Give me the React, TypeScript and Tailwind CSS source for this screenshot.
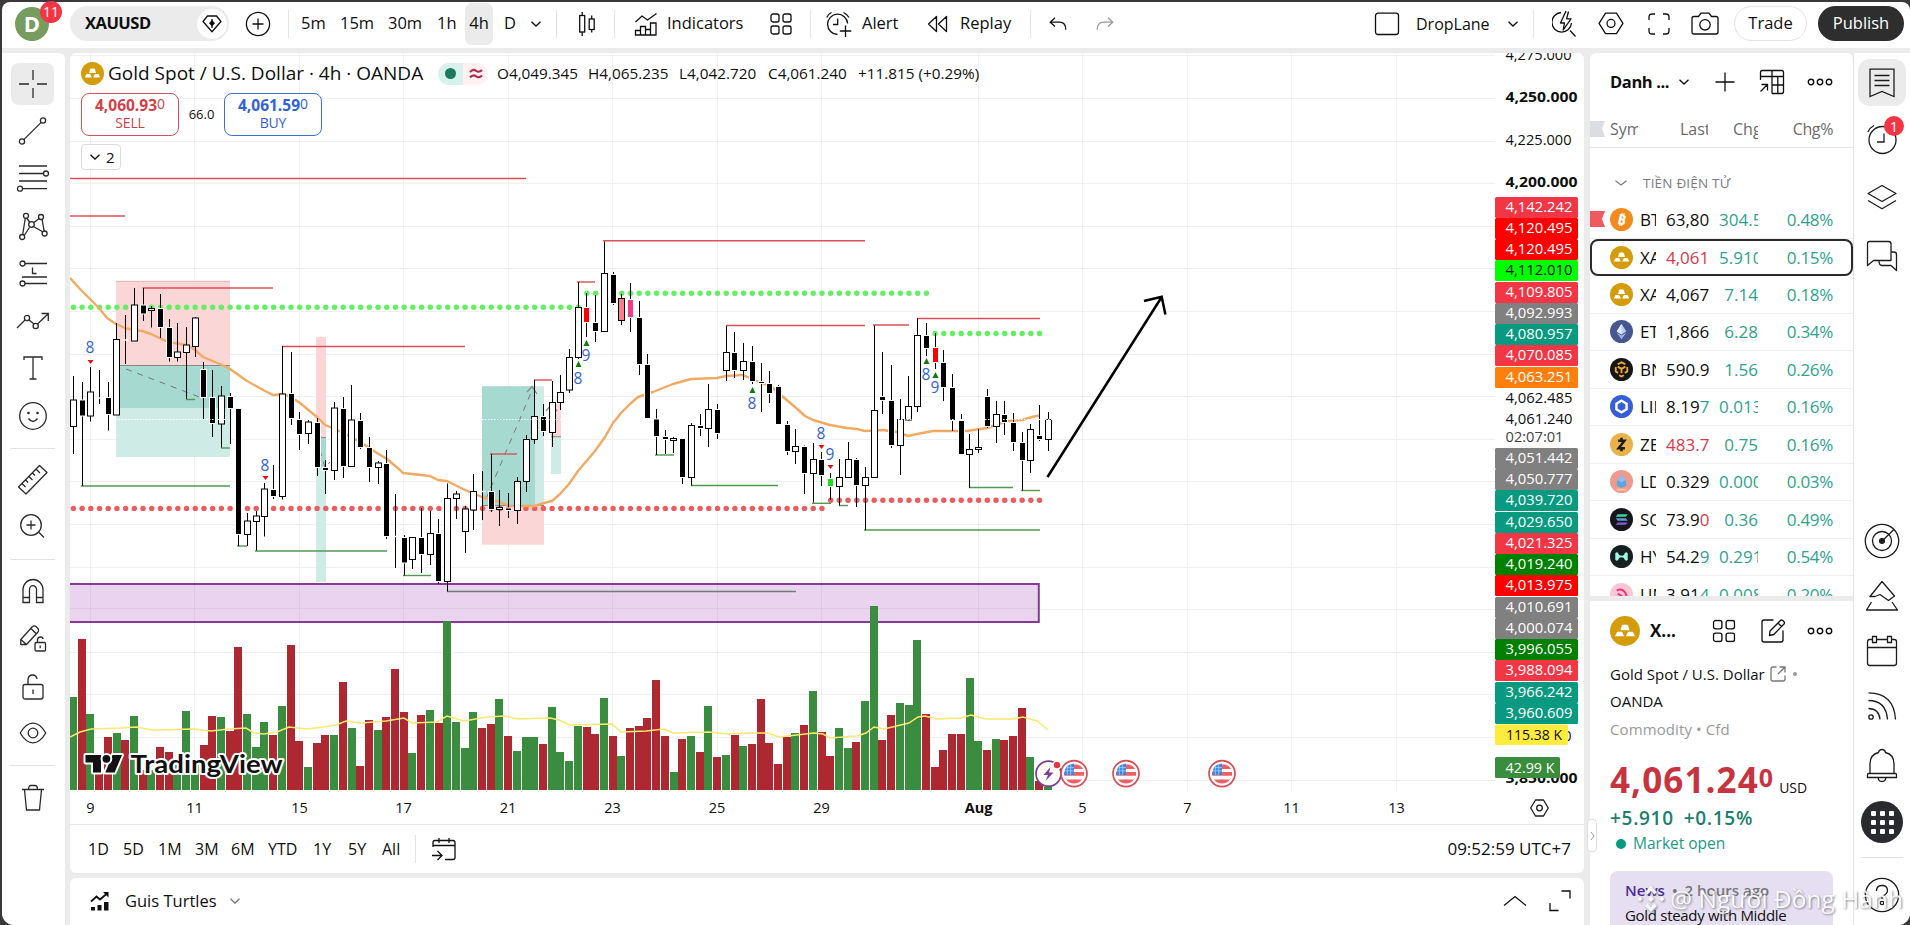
import type { ReactNode } from 'react';

type CandleKind = 'h' | 'f' | 'd' | 'red' | 'pink' | 'magenta' | 'green';
type Candle = [high: number, top: number, bottom: number, low: number, kind: CandleKind];

const FIRST_X = 73.4;
const STEP = 8.704;
const barX = (i: number) => FIRST_X + STEP * i;

const candles: Candle[] = [
  [376, 400, 426.5, 454, 'h'], [382, 400.5, 415.5, 486, 'f'], [367, 392, 416, 421.5, 'h'], [370, 398, 398, 404, 'd'],
  [382, 398, 414, 430.5, 'f'], [323, 339.5, 415, 415, 'h'], [315, 340, 340, 364, 'd'], [288, 305, 341, 341, 'h'],
  [288, 305.5, 313.5, 321, 'f'], [306, 308.5, 310.5, 327.5, 'h'], [294, 309, 327, 338, 'f'], [319, 328, 357, 361.5, 'f'],
  [323, 352, 357.5, 361.5, 'h'], [327, 345, 352.5, 399, 'h'], [317, 318, 346.5, 357, 'h'], [362, 370, 397, 419, 'f'],
  [370, 398, 423, 437, 'f'], [386, 396, 424, 447.5, 'h'], [393, 397, 408, 444, 'f'], [409, 409, 534, 546, 'f'],
  [513, 521, 534.5, 546, 'h'], [511, 516, 521.5, 550.5, 'h'], [483, 489, 516.5, 536.5, 'h'], [465, 490, 496, 499, 'f'],
  [346, 394, 496.5, 499.5, 'h'], [352, 394, 418, 425, 'f'], [412, 420, 434, 450, 'f'], [420, 422, 433.5, 444, 'h'],
  [418, 423, 467, 476, 'f'], [460, 468, 470, 494, 'f'], [402, 408, 470.5, 480, 'h'], [397, 409, 466, 478, 'f'],
  [385, 420, 466.5, 466.5, 'h'], [413, 421, 447, 449, 'f'], [437, 448, 467, 482, 'f'], [461, 463, 467.5, 484, 'h'],
  [450, 464, 536, 539, 'f'], [494, 536.5, 536.5, 568, 'd'], [535, 538, 562.5, 575.5, 'f'], [537, 537.5, 559.5, 569, 'h'],
  [508, 538, 554, 573, 'f'], [511, 533.5, 554.5, 565, 'h'], [519, 534, 581, 584, 'f'], [483.5, 498.5, 581.5, 591.5, 'h'],
  [491, 494, 498.5, 519, 'h'], [506, 509, 531.5, 553, 'h'], [474, 491.5, 510, 530, 'h'], [471, 491.5, 491.5, 520, 'd'],
  [454, 492, 509, 512, 'f'], [490, 507.5, 509.5, 526, 'h'], [493, 508.5, 510, 518, 'f'], [477, 481.5, 510.5, 524, 'h'],
  [435, 439.5, 481.5, 492, 'h'], [380, 416.5, 439.5, 444, 'h'], [404, 417, 431, 436, 'f'], [381, 402.5, 432.5, 447, 'h'],
  [375, 392.5, 402.5, 410, 'h'], [349, 357.5, 390, 393, 'h'], [282, 307.5, 357.5, 359, 'h'], [293, 308, 322, 337, 'red'],
  [295, 323, 331, 342, 'f'], [241.5, 273.5, 331.5, 331.5, 'h'], [272, 275, 303, 305, 'f'], [294, 298.5, 320.5, 325, 'pink'],
  [283, 300, 317, 332, 'magenta'], [301, 318, 364, 375, 'f'], [354, 365, 418, 418, 'f'], [409, 419.5, 436, 455, 'f'],
  [430, 437, 439, 454, 'f'], [437, 438.5, 440.5, 453, 'h'], [439, 439, 477, 484, 'f'], [423, 425.5, 477.5, 485.5, 'h'],
  [414, 426, 428, 436, 'f'], [384, 409.5, 428.5, 447, 'h'], [404, 410, 433, 439, 'f'], [326, 352.5, 370.5, 381, 'h'],
  [332, 353, 370, 378, 'f'], [343, 361.5, 370.5, 380, 'h'], [346, 362, 381, 384, 'f'], [363, 382, 383, 412, 'f'],
  [371, 384, 393, 403, 'f'], [385, 387, 424, 424, 'f'], [421, 425, 451, 455, 'f'], [429, 446.5, 451.5, 464, 'h'],
  [445.5, 447, 473, 494, 'f'], [443, 459.5, 473.5, 502.5, 'h'], [452, 460, 475, 486, 'f'], [473, 479, 486, 500, 'green'],
  [459, 477.5, 486.5, 505.5, 'h'], [442, 459.5, 477.5, 477.5, 'h'], [458, 460, 485, 507, 'f'], [467, 477.5, 485.5, 530, 'h'],
  [325.5, 410.5, 477.5, 477.5, 'h'], [352, 397, 400, 414, 'f'], [365, 401, 445, 448, 'f'], [399, 419.5, 445.5, 475, 'h'],
  [376, 406.5, 420, 420.5, 'h'], [318.5, 335.5, 406.5, 412, 'h'], [323, 336, 348, 356, 'f'], [333, 348, 362, 369, 'red'],
  [350, 363, 387, 401, 'f'], [374, 388, 420, 431, 'f'], [414, 421, 454, 454, 'f'], [434, 449.5, 454.5, 488, 'h'],
  [429, 447.5, 449.5, 453, 'h'], [389, 397, 426, 428, 'f'], [401, 414.5, 426.5, 443, 'h'], [401, 415, 422, 435, 'f'],
  [413, 423, 442, 451, 'f'], [432, 443, 460, 490.5, 'f'], [424, 429.5, 460.5, 473, 'h'], [405, 436, 439, 441, 'f'],
  [412, 419.5, 439.5, 451, 'h'],
];

// volume bar tops, g = up bar, r = down bar
const volume = (
  'g697 r639 g714 r770 r737 g733 r740 g716 r770 g770 r747 r752 g765 g711 g765 r745 r716 g717 r731 r647 g714 g747 g722 r735 '
  + 'g706 r645 r741 g767 r743 r735 g735 r682 g728 r766 r720 g730 r717 r669 r712 g753 r715 g710 r723 g621 g722 g748 g712 r728 '
  + 'r724 g699 r736 g751 g737 g737 r744 g707 g752 g761 g726 r727 r734 g698 r736 g756 r728 r726 r718 r680 r736 g772 r739 g736 '
  + 'r752 g706 r757 g755 r735 g746 r744 r699 r743 r764 r737 g733 r725 g691 r732 r756 g728 g748 r742 g701 g606 r740 r715 g703 '
  + 'g705 g640 r714 r767 r750 r734 r734 g678 g741 r750 g739 r740 r736 r708 g757 r781 g787'
).split(' ');

const maLine
  = '70,278 81,290 99,308 107,318 116,324 125,328 134,330 142,331 151,334 168,342 186,345 194,349 203,357 220,364 230,369 247,381 265,391 273,395 283,394 291,397 300,403 317,417 325,425 333,428 347,435 362,443 377,453 387,459 400,470 403,473 412,474 430,476 438,480 447,481 463,489 482,497 500,502 509,506 535,506 544,503 552,501 560,494 569,484 578,471 595,451 605,437 613,423 621,413 630,404 638,397 653,392 673,384 691,379 717,378 726,376 743,375 752,379 762,383 772,387 782,396 795,407 805,416 813,420 830,425 847,428 857,429 865,431 883,430 897,432 908,436 917,434 933,431 967,431 987,428 1007,421 1022,420 1032,417 1039,415.5';

const volumeMa
  = '70,737 80,732 91,729 121,728 136,727 152,730 193,729 211,731 229,729 246,728 254,733 264,734 277,732 289,727 307,729 323,727 336,725 346,721 361,723 386,721 404,718 412,723 437,722 447,716 464,721 487,717 505,716 518,719 550,718 559,720 570,725 612,724 621,732 646,731 664,729 673,733 709,732 727,734 750,733 768,733 779,737 814,733 823,734 830,738 857,736 866,733 874,727 884,729 909,723 918,717 925,716 937,719 961,718 971,715 986,719 1014,719 1023,717 1037,721 1048,730';

const resistance = [
  [70, 526, 178.5], [70, 125, 216], [142.5, 273, 288], [282, 465, 346.5], [577, 595, 282], [534, 552, 380],
  [490, 517, 454], [603, 865, 240.7], [726, 865, 325.5], [873, 909, 325], [917, 1040, 318.5],
];

const support = [
  [81, 230, 486], [221, 230, 448], [186, 195, 399.5], [237, 247, 546], [255, 387, 551], [403, 431, 575.5],
  [447, 796, 591.5], [655, 674, 455], [691, 778, 485.5], [812, 831, 503.3], [839, 848, 505.5], [864, 1040, 530],
  [969, 1013, 487.5], [1021, 1040, 490.5],
];

// first bar, last bar, y, colour
const dotRuns: [number, number, number, string][] = [
  [0, 58, 307.3, '#62f062'], [59, 98, 293.3, '#62f062'], [99, 111, 333.5, '#62f062'],
  [0, 86, 508.4, '#ec5c5c'], [87, 111, 500.3, '#ec5c5c'],
];

const signals: [string, number, number, number, 'up' | 'down'][] = [
  ['8', 90, 347, 362, 'down'], ['8', 265, 465, 478, 'down'], ['9', 586, 355, 343, 'up'], ['8', 578, 378, 364, 'up'],
  ['8', 752, 403, 390, 'up'], ['8', 821, 433, 447, 'down'], ['9', 830, 454, 467, 'down'], ['8', 926, 374, 361, 'up'],
  ['9', 935, 387, 375, 'up'],
];

const priceTags: [string, number, string, string][] = [
  ['4,142.242', 197, '#f23645', '#fff'], ['4,120.495', 218, '#ff0000', '#fff'], ['4,120.495', 239, '#ff0000', '#fff'],
  ['4,112.010', 260, '#00ff00', '#0f0f0f'], ['4,109.805', 282, '#f23645', '#fff'], ['4,092.993', 303, '#808080', '#fff'],
  ['4,080.957', 324, '#089981', '#fff'], ['4,070.085', 345, '#f23645', '#fff'], ['4,063.251', 367, '#ff7f0e', '#fff'],
  ['4,062.485', 388, '#ffffff', '#0f0f0f'], ['4,061.240', 409, '#ffffff', '#0f0f0f'],
  ['4,051.442', 448, '#808080', '#fff'], ['4,050.777', 469, '#808080', '#fff'], ['4,039.720', 490, '#089981', '#fff'],
  ['4,029.650', 512, '#089981', '#fff'], ['4,021.325', 533, '#f23645', '#fff'], ['4,019.240', 554, '#008000', '#fff'],
  ['4,013.975', 575, '#ff0000', '#fff'], ['4,010.691', 597, '#808080', '#fff'], ['4,000.074', 618, '#808080', '#fff'],
  ['3,996.055', 639, '#008000', '#fff'], ['3,988.094', 660, '#f23645', '#fff'], ['3,966.242', 682, '#089981', '#fff'],
  ['3,960.609', 703, '#089981', '#fff'],
];

const dateTicks: [string, number][] = [
  ['9', 90.5], ['11', 194.5], ['15', 299.5], ['17', 403.5], ['21', 508], ['23', 612.5], ['25', 717], ['29', 821.5],
  ['Aug', 978.5], ['5', 1082.5], ['7', 1187.5], ['11', 1291.5], ['13', 1396.5],
];

const candleFill: Record<CandleKind, string> = {
  h: '#fff', f: '#000', d: '#fff', red: '#ff0000', pink: '#fb7f88', magenta: '#f23a85', green: '#16e216',
};

function Svg({ w, h, className = '', sw = 1.3, children }: { w: number; h: number; className?: string; sw?: number; children: ReactNode }) {
  return (
    <svg width={w} height={h} viewBox={`0 0 ${w} ${h}`} fill="none" stroke="currentColor" strokeWidth={sw} className={`shrink-0 ${className}`}>
      {children}
    </svg>
  );
}

function Chevron({ className = '', size = 10 }: { className?: string; size?: number }) {
  return <Svg w={size} h={6} className={className}><path d={`M.5 .8 L${size / 2} 5 L${size - 0.5} .8`} /></Svg>;
}

function Divider({ className = '' }: { className?: string }) {
  return <div className={`h-7 w-px shrink-0 bg-[#e3e3e3] ${className}`} />;
}

function GoldLogo({ size, className = '' }: { size: number; className?: string }) {
  return (
    <svg width={size} height={size} viewBox="0 0 24 24" className={`shrink-0 ${className}`}>
      <circle cx="12" cy="12" r="12" fill="#d49c0a" />
      <g fill="#fff">
        <path d="M8.4 11.4 L9.5 7.6 Q9.8 6.9 10.5 6.9 H13.5 Q14.2 6.9 14.5 7.6 L15.6 11.4Z" />
        <path d="M4 16.2 L5.3 13.3 Q5.6 12.6 6.3 12.6 H9 Q9.7 12.6 10 13.3 L11.3 16.2Z" />
        <path d="M12.7 16.2 L14 13.3 Q14.3 12.6 15 12.6 H17.7 Q18.4 12.6 18.7 13.3 L20 16.2Z" />
      </g>
    </svg>
  );
}

function FourSquares({ size }: { size: number }) {
  return (
    <Svg w={22} h={22} className={size > 22 ? 'scale-105' : ''}>
      <rect x="1" y="1" width="8" height="8" rx="2" />
      <rect x="13" y="1" width="8" height="8" rx="2" />
      <rect x="1" y="13" width="8" height="8" rx="2" />
      <rect x="13" y="13" width="8" height="8" rx="2" />
    </Svg>
  );
}

function MoreDots() {
  return (
    <Svg w={26} h={10} sw={1.4}>
      <circle cx="4" cy="5" r="2.7" />
      <circle cx="13" cy="5" r="2.7" />
      <circle cx="22" cy="5" r="2.7" />
    </Svg>
  );
}

function Hexagon({ size }: { size: number }) {
  return (
    <svg width={size} height={size * 0.88} viewBox="0 0 26 23" fill="none" stroke="currentColor" strokeWidth={size > 20 ? 1.3 : 1.8} className="shrink-0">
      <path d="M7.5 1.2 H18.5 L25 11.5 L18.5 21.8 H7.5 L1 11.5Z" strokeLinejoin="round" />
      <circle cx="13" cy="11.5" r="4" />
    </svg>
  );
}

function TopBar() {
  return (
    <header className="flex h-[46px] shrink-0 items-center rounded-t-lg bg-white pb-[3px] text-[16.5px] font-medium whitespace-nowrap">
      <div className="relative ml-[13px] flex size-[34px] items-center justify-center rounded-full bg-[#769c5f] text-[22px] font-bold text-white">
        D
        <span className="absolute -top-[6px] left-[25px] flex size-[22px] items-center justify-center rounded-full bg-[#f23645] text-[14px] font-normal">11</span>
      </div>
      <div className="ml-[21px] flex h-[35px] w-[159px] items-center justify-between rounded-full bg-[#ebebeb] pr-0.5 pl-[15px]">
        <span className="font-bold tracking-[-0.5px]">XAUUSD</span>
        <span className="flex size-[30px] items-center justify-center rounded-full bg-white">
          <Svg w={20} h={18}>
            <path d="M5.5 1 H14.5 L19 6.5 L10 16.8 L1 6.5Z" strokeLinejoin="round" />
            <path d="M10 4 V13" />
            <path d="M10 5 L13 8.2 L10 11.5 L7 8.2Z" fill="currentColor" stroke="none" />
          </Svg>
        </span>
      </div>
      <Svg w={26} h={26} className="ml-[16px]">
        <circle cx="13" cy="13" r="11.6" />
        <path d="M13 7.5 V18.5 M7.5 13 H18.5" />
      </Svg>
      <Divider className="ml-[17px]" />
      <span className="ml-[12px] w-[39px]">5m</span>
      <span className="w-[48px]">15m</span>
      <span className="w-[49px]">30m</span>
      <span className="w-[28px]">1h</span>
      <span className="flex h-[42px] w-[28px] items-center justify-center rounded-[7px] bg-[#ebebeb]">4h</span>
      <span className="ml-[11px] w-[27px]">D</span>
      <Chevron />
      <Divider className="ml-[15px]" />
      <Svg w={18} h={26} className="ml-[21px]">
        <rect x="1.7" y="4.5" width="5" height="16.5" />
        <path d="M4.2 1 V4.5 M4.2 21 V25 M13.7 4.5 V8 M13.7 18.5 V21.5" />
        <rect x="11.2" y="8" width="5" height="10.5" />
      </Svg>
      <Divider className="ml-[18px]" />
      <Svg w={24} h={24} className="ml-[19px]">
        <path d="M1.5 10 L8 4 L13.5 8 L22.5 1.5" />
        <path d="M1.5 23 V18.5 H6.5 V23 M6.5 19 V14.5 H11.5 V23 M11.5 17.5 H16.5 V23 M16.5 18 V11 H22 V23 M1 23 H22.5" />
      </Svg>
      <span className="ml-[9px] w-[103px]">Indicators</span>
      <FourSquares size={22} />
      <Divider className="ml-[18px]" />
      <Svg w={28} h={26} className="ml-[14px]">
        <path d="M12.5 23.5 A10 10.2 0 1 1 22.6 12.5" />
        <path d="M12.7 7.5 V13.5 H8 M1.8 6.5 Q3 3 6.5 1.5 M18.5 1.5 Q22 3 24 6.5" />
        <path d="M20.5 14.5 V26 M14.8 20 H26.3" />
      </Svg>
      <span className="ml-[9px] w-[65px]">Alert</span>
      <Svg w={22} h={18}>
        <path d="M9.5 1.5 V16.5 L1.5 9Z M19.5 1.5 V16.5 L11.5 9Z" strokeLinejoin="round" />
      </Svg>
      <span className="ml-[11px] w-[70px]">Replay</span>
      <Divider />
      <Svg w={18} h={14} className="ml-[18px]">
        <path d="M6 .8 L1.2 5.2 L6 9.6 M1.2 5.2 H10.5 Q16.8 5.2 16.8 12.8" />
      </Svg>
      <Svg w={18} h={14} className="ml-[29px] text-[#9a9a9a]">
        <path d="M12 .8 L16.8 5.2 L12 9.6 M16.8 5.2 H7.5 Q1.2 5.2 1.2 12.8" />
      </Svg>

      <div className="ml-auto flex items-center">
        <Svg w={26} h={24}><rect x="1.5" y="1.2" width="23" height="21.3" rx="2.5" /></Svg>
        <span className="ml-[16px] w-[92px] text-[16px]">DropLane</span>
        <Chevron />
        <Divider className="ml-[15px]" />
        <Svg w={26} h={28} className="ml-[18px]">
          <path d="M9 2.5 A9.8 9.8 0 1 0 19.5 13 M18 20.5 L23.5 26.5" />
          <path d="M14 1 L8.5 13 H12.5 L11.2 20 L19 8.8 H14.6 L16.5 1.5" strokeLinejoin="round" />
        </Svg>
        <div className="ml-[20px]"><Hexagon size={26} /></div>
        <Svg w={22} h={22} className="ml-[24px]">
          <path d="M1 7 V4 Q1 1 4 1 H7 M15 1 H18 Q21 1 21 4 V7 M21 15 V18 Q21 21 18 21 H15 M7 21 H4 Q1 21 1 18 V15" />
        </Svg>
        <Svg w={28} h={24} className="ml-[21px]">
          <path d="M1 6.5 Q1 4.5 3 4.5 H7.5 L10 1.2 H18 L20.5 4.5 H25 Q27 4.5 27 6.5 V20 Q27 22 25 22 H3 Q1 22 1 20Z" />
          <circle cx="14" cy="12.8" r="5.2" />
        </Svg>
        <span className="ml-[15px] flex h-[35px] w-[73px] items-center justify-center rounded-full border border-[#e3e3e3]">Trade</span>
        <span className="mr-[6px] ml-[11px] flex h-[35px] w-[86px] items-center justify-center rounded-full bg-[#2e2e2e] text-white">Publish</span>
      </div>
    </header>
  );
}

function LeftTools() {
  return (
    <aside className="flex w-[63px] shrink-0 flex-col items-center rounded-tr-md rounded-bl-xl bg-white pr-[2px] text-[#2a2a2a]">
      <div className="mt-[10px] flex h-[42px] w-[43px] items-center justify-center rounded-lg bg-[#ebebeb]">
        <Svg w={30} h={30}><path d="M15 1 V11 M15 19 V29 M1 15 H11 M19 15 H29" /></Svg>
      </div>
      <Svg w={30} h={30} className="mt-[11px]">
        <circle cx="4" cy="25.5" r="2.6" />
        <circle cx="25" cy="4.5" r="2.6" />
        <path d="M5.8 23.6 L23.2 6.4" />
      </Svg>
      <Svg w={32} h={28} className="mt-[18px]">
        <path d="M2 2 H30 M2 9.5 H26.5 M2 17 H30 M5.5 24.7 H30" />
        <circle cx="29" cy="9.5" r="2.5" />
        <circle cx="3" cy="24.7" r="2.5" />
      </Svg>
      <Svg w={30} h={30} className="mt-[19px]">
        <path d="M4.7 23.5 L7.3 7 M8.6 7 L12 11.5 M16 11.5 L21.5 7.3 M24 8 L26.2 20.5 M6.5 24 L11.5 16.5 M15.5 15.5 L25 21" />
        <circle cx="8" cy="4.8" r="2.5" />
        <circle cx="23" cy="6" r="2.5" />
        <circle cx="13.5" cy="13.5" r="2.8" />
        <circle cx="4.2" cy="26" r="2.5" />
        <circle cx="26.6" cy="22.5" r="2.5" />
      </Svg>
      <Svg w={30} h={28} className="mt-[19px]">
        <circle cx="4.5" cy="3.5" r="2.5" />
        <circle cx="4.5" cy="23.5" r="2.5" />
        <path d="M7 3.5 H29 M4 17 H29 M7 23.5 H29 M14.5 7.5 V13.5 H18.5" />
      </Svg>
      <Svg w={34} h={20} className="mt-[24px]">
        <path d="M1 16 L9 8 M13 8 L18 12 M21.5 12 L32 2 M25.5 1.5 H32.3 V9" />
        <circle cx="11" cy="6" r="2.6" />
        <circle cx="19.7" cy="14" r="2.6" />
      </Svg>
      <Svg w={22} h={26} className="mt-[23px]">
        <path d="M2 5 V2 H20 V5 M11 2 V24 M7.5 24 H14.5" />
      </Svg>
      <Svg w={30} h={30} className="mt-[20px]">
        <circle cx="15" cy="15" r="13.3" />
        <circle cx="10.5" cy="12" r="1.3" fill="currentColor" stroke="none" />
        <circle cx="19.5" cy="12" r="1.3" fill="currentColor" stroke="none" />
        <path d="M10.5 17.5 Q15 23.5 19.5 17.5" />
      </Svg>
      <div className="mt-[17px] h-px w-[45px] bg-[#e3e3e3]" />
      <Svg w={32} h={32} className="mt-[15px]">
        <path d="M22.5 1.5 L30 8.5 L9 30 L1.5 23Z M19 5 L23 9 M15.5 9 L18 11.5 M12 12.5 L15.5 16 M8.5 16 L11 18.5 M5 19.5 L8.5 23" strokeLinejoin="round" />
      </Svg>
      <Svg w={28} h={28} className="mt-[17px]">
        <circle cx="12" cy="12" r="10.3" />
        <path d="M12 7.5 V16.5 M7.5 12 H16.5 M19.5 19 L25 24.5" />
      </Svg>
      <div className="mt-[18px] h-px w-[45px] bg-[#e3e3e3]" />
      <Svg w={24} h={26} className="mt-[18px]">
        <path d="M2 24.5 V11.5 A10 10 0 0 1 22 11.5 V24.5 H15.5 V11.5 A3.5 3.8 0 0 0 8.5 11.5 V24.5Z M2 19.5 H8.5 M15.5 19.5 H22" />
      </Svg>
      <Svg w={28} h={30} className="mt-[20px]">
        <path d="M1.8 15.5 L13.5 2.5 Q15.5 1 17.5 3 L19.3 5 Q20 6.5 19 8 L7.5 20.5 H1.8Z M12 4.5 L17.5 10 M1.8 15.5 L7.5 20.5" strokeLinejoin="round" />
        <rect x="16" y="18.5" width="10.5" height="8.5" rx="1.2" />
        <path d="M18.5 18.5 V15.5 Q19 13 21.5 13 Q24 13 24 15 M21.2 21.5 V24.2" />
      </Svg>
      <Svg w={22} h={28} className="mt-[19px]">
        <rect x="1" y="11.5" width="20" height="14.5" rx="2" />
        <path d="M6 11.5 V6.5 Q6.5 2 10.5 2 Q14.5 2 15 6 M11 16.5 V21" />
      </Svg>
      <Svg w={28} h={24} className="mt-[20px]">
        <path d="M1.2 12 Q7 2.2 14 2.2 T26.8 12 Q21 21.8 14 21.8 T1.2 12Z" />
        <circle cx="14" cy="12" r="4.8" />
      </Svg>
      <div className="mt-[20px] h-px w-[45px] bg-[#e3e3e3]" />
      <Svg w={24} h={28} className="mt-[18px]">
        <path d="M1 5.5 H23 M3.5 5.5 L5.5 26 H18.5 L20.5 5.5 M7.5 5.5 Q7.5 1.5 10 1.5 H14 Q16.5 1.5 16.5 5.5" />
      </Svg>
    </aside>
  );
}

function FlagEvent({ x }: { x: number }) {
  return (
    <g transform={`translate(${x} 773.6)`}>
      <circle r="13" fill="#fff" stroke="#dc4b53" strokeWidth="1.7" />
      <path d="M-1 -9 H3 Q7.5 -8 9 -4.5 H-1Z M-9.8 -1.5 H10 V2.2 H-9.8Z M-8 6 H8 Q5 10 0 10 T-8 6Z" fill="#ee5f63" />
      <path d="M0 -10 V1.5 H-10 Q-9.5 -9.5 0 -10Z" fill="#3f86e0" />
      <path d="M-7.5 -6 H0 M-9 -2.8 H0 M-6.7 -8 V1.5 M-3.3 -9.5 V1.5" stroke="#a9ceff" strokeWidth=".8" />
    </g>
  );
}

function Chart() {
  return (
    <svg width={1514} height={771} viewBox="70 53 1514 771" className="block" fontSize="15">
      {/* grid */}
      <g stroke="#f0f0f0" strokeWidth="1">
        {Array.from({ length: 18 }, (_, i) => Math.round(55.4 + 42.6 * i) + 0.5).map(y => <path key={y} d={`M70 ${y} H1495`} />)}
        {dateTicks.map(([, x]) => <path key={x} d={`M${Math.floor(x) + 0.5} 53 V790`} />)}
      </g>

      {/* position boxes */}
      <rect x="116" y="281" width="114" height="84.5" fill="#fbd6d6" />
      <rect x="116" y="365.5" width="114" height="91.5" fill="#cfebe5" />
      <rect x="120" y="365.5" width="110" height="42.5" fill="#a6d9cf" />
      <rect x="316" y="337" width="10" height="100.5" fill="#fbd6d6" />
      <rect x="316" y="437.5" width="10" height="144.5" fill="#cfebe5" />
      <rect x="320" y="437.5" width="6" height="31" fill="#a6d9cf" />
      <rect x="482" y="386.3" width="62" height="119.5" fill="#cfebe5" />
      <rect x="482" y="386.3" width="53" height="119.5" fill="#a6d9cf" />
      <rect x="482" y="505.7" width="62" height="39" fill="#fbd6d6" />
      <rect x="551" y="404" width="10" height="33" fill="#fbd6d6" />
      <rect x="551" y="437" width="10" height="37" fill="#cfebe5" />
      <path d="M116 281.3 H230" stroke="#e3b4b4" />
      <path d="M120 365.5 H230 M482 505.5 H544 M551 436.7 H561 M316 437.5 H326" stroke="#888" />
      <path d="M126 369 L202 398 M486 499 L533 388 M320 450 L325 468 L330 462" fill="none" stroke="#777" strokeDasharray="6 6" />
      <path d="M527 392 L532 386.5 L537 394 M546 411 L551 405 L557 411" fill="none" stroke="#8a8a8a" strokeWidth="1.3" />

      {/* demand zone */}
      <rect x="60" y="584" width="978.8" height="38" fill="#ead3ef" />
      <g stroke="#dfc8e4">
        <path d="M70 608.5 H1038" />
        {dateTicks.slice(0, 9).map(([, x]) => <path key={x} d={`M${Math.floor(x) + 0.5} 585 V621`} />)}
      </g>
      <rect x="60" y="584" width="978.8" height="38" fill="none" stroke="#873a93" strokeWidth="2" />

      {/* volume */}
      {volume.map((bar, i) => {
        const top = Number(bar.slice(1));
        const left = Math.max(70, Math.round(barX(i) - 4.4));
        return <rect key={i} x={left} y={top} width={Math.round(barX(i) + 3.6) - left} height={790 - top} fill={bar[0] === 'g' ? '#3a8c3e' : '#ae2832'} />;
      })}
      <polyline points={volumeMa} fill="none" stroke="#fae86f" strokeWidth="1.5" />

      {resistance.map(([x1, x2, y]) => <path key={`${x1}-${y}`} d={`M${x1} ${y} H${x2}`} stroke="#dc5157" strokeWidth="1.4" />)}
      {support.map(([x1, x2, y]) => <path key={`${x1}-${y}`} d={`M${x1} ${y} H${x2}`} stroke={y === 591.5 ? '#6c8072' : '#4f9a50'} strokeWidth="1.4" />)}

      {dotRuns.map(([from, to, y, color]) =>
        Array.from({ length: to - from + 1 }, (_, k) => (
          <circle key={`${from}-${y}-${k}`} cx={barX(from + k)} cy={y} r="2.7" fill={color} />
        )))}

      <polyline points={maLine} fill="none" stroke="#f2aa62" strokeWidth="2.4" strokeLinejoin="round" />

      {/* candles */}
      {candles.map(([high, top, bottom, low, kind], i) => {
        const x = Math.floor(barX(i)) + 0.5;
        if (kind === 'd') {
          return (
            <g key={i}>
              <path d={`M${x} ${high} V${low}`} stroke="#000" />
              <path d={`M${x - 3} ${top} H${x + 3}`} stroke="#fff" strokeWidth="1.4" />
            </g>
          );
        }
        const outlined = kind === 'h' || kind === 'pink';
        return (
          <g key={i}>
            <path d={`M${x} ${high} V${low}`} stroke="#000" />
            {!outlined && <rect x={x - 3.5} y={top - 1} width={7} height={Math.max(1, bottom - top) + 2} fill="#fff" />}
            <rect
              x={outlined ? x - 3 : x - 2.5}
              y={top}
              width={outlined ? 6 : 5}
              height={Math.max(1, bottom - top)}
              fill={candleFill[kind]}
              stroke={outlined ? '#000' : 'none'}
            />
          </g>
        );
      })}
      <path d="M116 419.5 H230 M482 419.5 H561 M895 419.5 H1052" stroke="#fff" strokeDasharray="1.5 1.5" />

      {signals.map(([label, x, y, ty, dir]) => (
        <g key={`${x}-${y}`}>
          <text x={x} y={y + 5.5} textAnchor="middle" fill="#3264d0" fontSize="15.5">{label}</text>
          <path
            d={dir === 'up' ? `M${x - 2.5} ${ty + 3} H${x + 3.5} L${x + 0.5} ${ty - 3}Z` : `M${x - 2.5} ${ty - 2} H${x + 3.5} L${x + 0.5} ${ty + 2}Z`}
            fill={dir === 'up' ? '#0c7a0c' : '#e01010'}
          />
        </g>
      ))}

      <path d="M1047.5 477 L1161.7 297 M1144 301 L1161.7 296.7 L1165.4 314.5" fill="none" stroke="#000" strokeWidth="2.5" />

      {/* events on the time axis */}
      <circle cx="1048.5" cy="773.7" r="12.5" fill="#fff" stroke="#7d3c98" strokeWidth="1.7" />
      <path d="M1050.5 767 L1043.5 775 H1048 L1045.5 781 L1053.5 772.5 H1049Z" fill="#7d3c98" />
      <circle cx="1057" cy="765" r="4.6" fill="#fff" />
      <circle cx="1057" cy="765" r="3.2" fill="#e8373f" />
      <FlagEvent x={1074} />
      <FlagEvent x={1126} />
      <FlagEvent x={1222} />

      {/* brand */}
      <g fill="#111" stroke="#fff" strokeWidth="4" strokeLinejoin="round" paintOrder="stroke">
        <path d="M85.5 755 H101 V772.5 H93 V762.5 H85.5Z M112.5 755 H122 L114.6 772.5 H105.3Z" />
        <circle cx="106.4" cy="758.8" r="3.9" />
        <text x="130.5" y="772.5" fontSize="25.5" fontWeight="700" fontFamily="Lato, sans-serif" textLength="152" lengthAdjust="spacingAndGlyphs">TradingView</text>
      </g>

      {/* price scale */}
      <g fill="#0f0f0f">
        <text x="1505.5" y="60" textLength="66" lengthAdjust="spacingAndGlyphs">4,275.000</text>
        <text x="1505.5" y="102" fontWeight="700" textLength="72" lengthAdjust="spacingAndGlyphs">4,250.000</text>
        <text x="1505.5" y="145" textLength="66" lengthAdjust="spacingAndGlyphs">4,225.000</text>
        <text x="1505.5" y="187" fontWeight="700" textLength="72" lengthAdjust="spacingAndGlyphs">4,200.000</text>
        <text x="1505.5" y="740.5" textLength="66" lengthAdjust="spacingAndGlyphs">3,875.000</text>
        <text x="1505.5" y="783" fontWeight="700" textLength="72" lengthAdjust="spacingAndGlyphs">3,850.000</text>
      </g>
      {priceTags.map(([label, y, bg, fg]) => (
        <g key={`${label}-${y}`}>
          <rect x="1495" y={y} width="83" height="21" rx="1.5" fill={bg} />
          <text x="1505.5" y={y + 15} fill={fg} fontWeight={fg === '#fff' ? 500 : 400} textLength="67" lengthAdjust="spacingAndGlyphs">{label}</text>
        </g>
      ))}
      <text x="1505.5" y="442" fill="#444" textLength="58" lengthAdjust="spacingAndGlyphs">02:07:01</text>
      <rect x="1495" y="724.5" width="73" height="20.5" rx="1.5" fill="#ffeb3b" />
      <text x="1506" y="740" fill="#0f0f0f" textLength="56" lengthAdjust="spacingAndGlyphs">115.38 K</text>
      <rect x="1495" y="757" width="65" height="21" rx="1.5" fill="#388e3c" />
      <text x="1505.5" y="772.5" fill="#fff" fontWeight="500" textLength="49" lengthAdjust="spacingAndGlyphs">42.99 K</text>

      {/* time scale */}
      {dateTicks.map(([label, x]) => (
        <text key={x} x={x} y="813" textAnchor="middle" fill="#0f0f0f" fontWeight={label === 'Aug' ? 700 : 400} fontSize="14.5">{label}</text>
      ))}
      <g fill="none" stroke="#1c1c1c" strokeWidth="1.3">
        <path d="M1535.5 800 H1543.5 L1548.3 808 L1543.5 816 H1535.5 L1530.7 808Z" strokeLinejoin="round" />
        <circle cx="1539.5" cy="808" r="2.8" />
      </g>
    </svg>
  );
}

function TradeButton({ price, sup, side, className }: { price: string; sup: string; side: string; className: string }) {
  return (
    <div className={`flex h-[43px] w-[98px] flex-col items-center justify-center rounded-lg border bg-white pb-[2px] leading-[17px] ${className}`}>
      <span className="text-[15.5px] font-bold">
        {price}
        <span className="relative -top-[2px] text-[14px] font-medium">{sup}</span>
      </span>
      <span className="text-[14px] tracking-[-0.2px]">{side}</span>
    </div>
  );
}

function Legend() {
  return (
    <div className="absolute top-[8px] left-[11px] flex flex-col whitespace-nowrap">
      <div className="flex h-[25px] items-center">
        <GoldLogo size={23} />
        <span className="ml-[4px] w-[330px] text-[19px]">Gold Spot / U.S. Dollar · 4h · OANDA</span>
        <div className="flex h-[22px] w-[50px] overflow-hidden rounded-full">
          <span className="flex w-1/2 items-center justify-center bg-[#d9f1ed]"><span className="size-[11px] rounded-full bg-[#1a7a5e]" /></span>
          <span className="flex w-1/2 items-center justify-center bg-[#fff0f2] text-[#b2284f]">
            <Svg w={14} h={12} sw={2}><path d="M1 4 Q4 .5 7 2.8 T13 2 M1 9.5 Q4 6 7 8.3 T13 7.5" /></Svg>
          </span>
        </div>
        <div className="ml-[9px] flex text-[15.3px]">
          <span className="w-[91px]">O4,049.345</span>
          <span className="w-[91px]">H4,065.235</span>
          <span className="w-[89px]">L4,042.720</span>
          <span className="w-[90px]">C4,061.240</span>
          <span>+11.815 (+0.29%)</span>
        </div>
      </div>
      <div className="mt-[7px] flex items-center">
        <TradeButton price="4,060.93" sup="0" side="SELL" className="border-[#d4525b] text-[#d23f49]" />
        <span className="w-[45px] text-center text-[13px]">66.0</span>
        <TradeButton price="4,061.59" sup="0" side="BUY" className="border-[#3f6fd6] text-[#2f63d8]" />
      </div>
      <div className="mt-[8px] flex h-[26px] w-[40px] items-center gap-[6px] rounded border border-[#dcdcdc] bg-white pl-[8px] text-[15px]">
        <Chevron />
        2
      </div>
    </div>
  );
}

function RangeBar() {
  return (
    <div className="flex h-[48px] items-center border-t border-[#e8e8e8] pr-[13px] pl-[18px] text-[16px] whitespace-nowrap">
      <span className="w-[35px]">1D</span>
      <span className="w-[35px]">5D</span>
      <span className="w-[37px]">1M</span>
      <span className="w-[36px]">3M</span>
      <span className="w-[37px]">6M</span>
      <span className="w-[45px]">YTD</span>
      <span className="w-[35px]">1Y</span>
      <span className="w-[34px]">5Y</span>
      <span className="w-[33px]">All</span>
      <Divider />
      <Svg w={26} h={24} className="ml-[15px]">
        <path d="M2 10 V5.5 Q2 3.5 4 3.5 H22 Q24 3.5 24 5.5 V20.5 Q24 22.5 22 22.5 H14 M2 8.5 H24 M8 1 V6 M18 1 V6 M1 18.5 H10.5 M6.5 14 L11 18.5 L6.5 23" />
      </Svg>
      <span className="ml-auto text-[17px]">09:52:59 UTC+7</span>
    </div>
  );
}

function BottomPanel() {
  return (
    <div className="flex h-[47px] items-center rounded-t-md bg-white pr-[13px] pb-[1px] pl-[20px]">
      <Svg w={20} h={20}>
        <path d="M1 10.5 L6.5 5.5 L10 8.5 L17 2.5" strokeWidth="1.8" />
        <path d="M13 1 H18.5 V6.5Z M1 16 H5 V19.5 H1Z M7.5 14 H11.5 V19.5 H7.5Z M14 11 H18.5 V19.5 H14Z" fill="currentColor" stroke="none" />
      </Svg>
      <span className="ml-[15px] w-[105px] text-[16.5px]">Guis Turtles</span>
      <Chevron className="text-[#777]" />
      <Svg w={24} h={12} className="ml-auto"><path d="M1 10.5 L12 1.5 L23 10.5" /></Svg>
      <Svg w={22} h={22} className="ml-[22px]"><path d="M12.5 1 H21 V8.5 M1 13 V20.5 H9.5" /></Svg>
    </div>
  );
}

interface Quote {
  symbol: string;
  last: ReactNode;
  change: string;
  percent: string;
  logo: ReactNode;
  lastClass?: string;
}

function Coin({ bg, children }: { bg: string; children: ReactNode }) {
  return (
    <svg width={23} height={23} viewBox="0 0 24 24" className="shrink-0">
      <circle cx="12" cy="12" r="12" fill={bg} />
      {children}
    </svg>
  );
}

const up = (head: string, tail: string) => (
  <>
    {head}
    <span className="text-[#2fa28d]">{tail}</span>
  </>
);

const quotes: Quote[] = [
  {
    symbol: 'BTCUSD', last: '63,80', change: '304.57', percent: '0.48%',
    logo: <Coin bg="#f28a1c"><text x="12.3" y="17.3" textAnchor="middle" fontSize="15" fontWeight="700" fill="#fff" transform="rotate(12 12 12)">₿</text></Coin>,
  },
  { symbol: 'XAUUSD', last: '4,061', change: '5.910', percent: '0.15%', lastClass: 'text-[#d93a46]', logo: <GoldLogo size={23} /> },
  { symbol: 'XAUUSDT', last: '4,067', change: '7.14', percent: '0.18%', logo: <GoldLogo size={23} /> },
  {
    symbol: 'ETHUSD', last: '1,866', change: '6.28', percent: '0.34%',
    logo: <Coin bg="#47568f"><path d="M12 4 L17 12 L12 15 L7 12Z" fill="#b9cdf8" /><path d="M12 4 V15 L7 12Z" fill="#e2eaff" /><path d="M7 13.3 L12 16.3 L17 13.3 L12 20Z" fill="#9fb7ef" /></Coin>,
  },
  {
    symbol: 'BNBUSD', last: '590.9', change: '1.56', percent: '0.26%',
    logo: <Coin bg="#161618"><path d="M8 6.5 L12 4.5 L16 6.5 M6 9.5 V14 L8.5 15.5 M18 9.5 V14 L15.5 15.5 M8 9 L12 11.3 L16 9 M12 11.5 V16 M9.5 18 L12 19.3 L14.5 18" fill="none" stroke="#f0a828" strokeWidth="1.9" /></Coin>,
  },
  {
    symbol: 'LINKUSD', last: up('8.19', '7'), change: '0.0137', percent: '0.16%',
    logo: <Coin bg="#345fd8"><path d="M12 6 L17.3 9 V15 L12 18 L6.7 15 V9Z" fill="none" stroke="#fff" strokeWidth="2.5" /></Coin>,
  },
  {
    symbol: 'ZECUSD', last: '483.7', change: '0.75', percent: '0.16%', lastClass: 'text-[#d93a46]',
    logo: <Coin bg="#e9b24a"><path d="M8.5 8 H15 L9 15.8 H15.6 M12 5 V8 M12 16 V19" fill="none" stroke="#1c1c1c" strokeWidth="2.6" /></Coin>,
  },
  {
    symbol: 'LDOUSD', last: '0.329', change: '0.0001', percent: '0.03%',
    logo: <Coin bg="#f09a8d"><path d="M12 4.5 L16.5 11.5 Q18.5 18 12 18.5 Q5.5 18 7.5 11.5Z" fill="#5fa5e3" /><path d="M12 4.5 L16 10.5 L12 13 L8 10.5Z" fill="#86c1f2" /><path d="M7 20.5 H17" stroke="#f7c79a" strokeWidth="2" /></Coin>,
  },
  {
    symbol: 'SOLUSD', last: <>73.9<span className="text-[#d93a46]">0</span></>, change: '0.36', percent: '0.49%',
    logo: <Coin bg="#17171b"><path d="M8 6.5 H18.5 L16.5 9 H6Z" fill="#3fd0a6" /><path d="M6 10.8 H16.5 L18.5 13.3 H8Z" fill="#5b9fd0" /><path d="M8 15 H18.5 L16.5 17.5 H6Z" fill="#8a5be0" /></Coin>,
  },
  {
    symbol: 'HYPEUSD', last: up('54.2', '9'), change: '0.291', percent: '0.54%',
    logo: <Coin bg="#16201f"><path d="M5.5 8.5 Q8 6 9.5 10.5 Q12 12 14.5 10.5 Q16 6 18.5 8.5 V15.5 Q16 18 14.5 13.5 Q12 12 9.5 13.5 Q8 18 5.5 15.5Z" fill="#a5f5e4" /></Coin>,
  },
  {
    symbol: 'UNIUSD', last: up('3.91', '4'), change: '0.0081', percent: '0.20%',
    logo: <Coin bg="#fbc7d6"><path d="M7 8 Q12 5 16 10 Q18 14 17 20 M8 11 L13 14 L10 18" fill="none" stroke="#e5337a" strokeWidth="2" /></Coin>,
  },
];

function FlagMark({ color }: { color: string }) {
  return (
    <svg width={15} height={16} viewBox="0 0 15 16" className="shrink-0">
      <path d="M0 0 H15 L12 8 L15 16 H0Z" fill={color} />
    </svg>
  );
}

function QuoteRow({ quote, index }: { quote: Quote; index: number }) {
  const selected = index === 1;
  return (
    <div className={`flex h-[37.5px] shrink-0 items-center text-[17px] whitespace-nowrap ${selected ? 'rounded-lg outline-2 -outline-offset-2 outline-[#2b2b2b]' : 'border-b border-[#efefef]'}`}>
      <div className="w-[20px]">{index === 0 && <FlagMark color="#f2595f" />}</div>
      {quote.logo}
      <span className="ml-[7px] w-[16px] overflow-hidden">{quote.symbol}</span>
      <span className={`ml-[10px] w-[43px] overflow-hidden ${quote.lastClass ?? ''}`}>{quote.last}</span>
      <span className={`ml-[10px] flex w-[39px] overflow-hidden text-[#2fa28d] ${quote.change.length < 5 ? 'justify-end' : ''}`}>{quote.change}</span>
      <span className="ml-[20px] w-[55px] text-right tracking-[-0.3px] text-[#2fa28d]">{quote.percent}</span>
    </div>
  );
}

function Watchlist() {
  return (
    <section className="flex h-[543px] shrink-0 flex-col overflow-hidden rounded-t-md bg-white">
      <div className="flex h-[58px] shrink-0 items-center pl-[20px]">
        <span className="w-[69px] text-[16.5px] font-bold tracking-[-0.4px]">Danh ...</span>
        <Chevron />
        <Svg w={20} h={20} className="ml-[26px]"><path d="M10 .5 V19.5 M.5 10 H19.5" /></Svg>
        <Svg w={26} h={26} className="ml-[24px]">
          <path d="M1.5 11 V3.5 Q1.5 1.5 3.5 1.5 H22.5 Q24.5 1.5 24.5 3.5 V22.5 Q24.5 24.5 22.5 24.5 H13 M1.5 7.5 H24.5 M13 1.5 V24.5 M18.8 7.5 V24.5 M13 16 H24.5 M1.5 22.5 L8.5 15.5 M2.5 15.5 H8.5 V21.5" />
        </Svg>
        <div className="ml-[22px]"><MoreDots /></div>
      </div>
      <div className="flex h-[37px] shrink-0 items-center border-b border-[#e3e3e3] text-[16px] whitespace-nowrap text-[#6b6b6b]">
        <div className="w-[20px]"><FlagMark color="#dcdde0" /></div>
        <span className="w-[28px] overflow-hidden">Symbol</span>
        <span className="ml-[42px] w-[28px] overflow-hidden">Last</span>
        <span className="ml-[25px] w-[25px] overflow-hidden">Chg</span>
        <span className="ml-[20px] w-[55px] text-right tracking-[-0.4px]">Chg%</span>
      </div>
      <div className="flex h-[53px] shrink-0 items-end pb-[8px] text-[13.5px] text-[#7b7b7b]">
        <Chevron size={12} className="mb-[7px] ml-[25px]" />
        <span className="ml-[16px] tracking-[0.2px]">TIỀN ĐIỆN TỬ</span>
      </div>
      {quotes.map((quote, index) => <QuoteRow key={quote.symbol} quote={quote} index={index} />)}
    </section>
  );
}

function Details() {
  return (
    <section className="mt-[5px] flex h-[324px] shrink-0 flex-col overflow-hidden bg-white pl-[20px] text-[15px] whitespace-nowrap">
      <div className="mt-[15px] flex h-[30px] shrink-0 items-center">
        <GoldLogo size={30} />
        <span className="ml-[10px] w-[63px] text-[17px] font-bold">X...</span>
        <FourSquares size={23} />
        <Svg w={26} h={26} className="ml-[25px]">
          <path d="M13.5 2 H4 Q2 2 2 4 V22 Q2 24 4 24 H21 Q23 24 23 22 V12.5 M9.5 17.5 L10 13 L20.5 2.5 Q21.5 1.5 22.8 2.5 L24 3.7 Q25 4.8 24 6 L13.8 16.5Z M18 5 L21.5 8.5" strokeLinejoin="round" />
        </Svg>
        <div className="ml-[21px]"><MoreDots /></div>
      </div>
      <div className="mt-[14px] flex h-[28px] shrink-0 items-center">
        <span className="w-[160px]">Gold Spot / U.S. Dollar</span>
        <Svg w={16} h={16} className="text-[#777]">
          <path d="M6.5 1 H3 Q1 1 1 3 V13 Q1 15 3 15 H13 Q15 15 15 13 V9.5 M9.5 1 H15 V6.5 M15 1 L8 8" />
        </Svg>
        <span className="ml-[7px] size-[4px] rounded-full bg-[#999]" />
      </div>
      <div className="flex h-[27px] shrink-0 items-center">OANDA</div>
      <div className="flex h-[28px] shrink-0 items-center tracking-[0.1px] text-[#9a9a9a]">Commodity • Cfd</div>
      <div className="mt-[12px] flex h-[50px] shrink-0 items-baseline">
        <span className="text-[35px] leading-[50px] font-bold tracking-[1.1px] text-[#c6353f]">4,061.24</span>
        <span className="relative -top-[6px] text-[25px] font-bold text-[#c6353f]">0</span>
        <span className="ml-[6px] text-[14px]">USD</span>
      </div>
      <div className="flex h-[26px] shrink-0 items-center gap-[10px] text-[19px] font-semibold tracking-[0.7px] text-[#1c7f6c]">
        <span>+5.910</span>
        <span>+0.15%</span>
      </div>
      <div className="flex h-[26px] shrink-0 items-center text-[15.5px] text-[#1d9a84]">
        <span className="mr-[7px] ml-[6px] size-[10px] rounded-full bg-[#089981]" />
        Market open
      </div>
      <div className="mt-[14px] h-[80px] w-[223px] shrink-0 rounded-lg bg-[#e6dff1] px-[15px] pt-[7px] leading-[25px]">
        <div className="font-semibold text-[#777]">
          <span className="text-[#4a2f96]">News</span>
          <span className="mx-[7px]">•</span>
          2 hours ago
        </div>
        <div className="font-medium tracking-[-0.3px]">Gold steady with Middle</div>
      </div>
    </section>
  );
}

function RightTools() {
  return (
    <aside className="flex w-[57px] shrink-0 flex-col items-center border-l border-[#e3e3e3] bg-white text-[#1c1c1c]">
      <div className="mt-[6px] flex h-[47px] w-[48px] items-center justify-center rounded-xl bg-[#ebebeb]">
        <Svg w={26} h={30}><path d="M1 1.2 H25 V28.5 L13 23.5 L1 28.5Z M5.5 7.5 H20.5 M5.5 12.5 H20.5 M5.5 17.5 H20.5" /></Svg>
      </div>
      <div className="relative mt-[18px] h-[32px] w-[30px]">
        <Svg w={30} h={32}>
          <circle cx="15.5" cy="16" r="13.5" />
          <path d="M17 9.5 V18 H10 M.8 8 Q3 3.5 7 1.5" />
        </Svg>
        <span className="absolute -top-[8px] left-[17px] flex size-[20px] items-center justify-center rounded-full bg-[#f23645] text-[14px] text-white">1</span>
      </div>
      <Svg w={30} h={26} className="mt-[28px]">
        <path d="M15 1.5 L29 9.5 L15 17.5 L1 9.5Z M1 16.5 L15 24.8 L29 16.5" strokeLinejoin="round" />
      </Svg>
      <Svg w={32} h={32} className="mt-[30px]">
        <path d="M3.5 1.5 H22.5 Q25 1.5 25 4 V20.5 H7.5 L1.5 25.5 V3.5 Q1.5 1.5 3.5 1.5Z M25 12 H28 Q30.5 12 30.5 14.5 V30.5 L25 25.5 H16 Q13 25.5 13 20.5" strokeLinejoin="round" />
      </Svg>
      <Svg w={36} h={36} className="mt-[251px]">
        <circle cx="18" cy="18" r="16.7" />
        <circle cx="18" cy="18" r="9.5" />
        <circle cx="18" cy="18" r="2.4" fill="currentColor" />
        <path d="M18 18 L30 6.5" />
      </Svg>
      <Svg w={34} h={32} className="mt-[21px]">
        <path d="M17 1.5 L29.5 16 L23.5 20.5 L15 14.5 L10 16.5 H5Z M6.5 22 L1.5 30 H32.5 L27 22" strokeLinejoin="round" />
      </Svg>
      <Svg w={32} h={32} className="mt-[23px]">
        <path d="M6.5 4.5 H3.5 Q1.5 4.5 1.5 7 V28 Q1.5 30.5 4 30.5 H28 Q30.5 30.5 30.5 28 V7 Q30.5 4.5 28.5 4.5 H25.5 M10.5 4.5 H21.5 M1.5 12.5 H30.5 M6.5 1.5 H10.5 V7.5 H6.5Z M21.5 1.5 H25.5 V7.5 H21.5Z" />
      </Svg>
      <Svg w={30} h={30} className="mt-[24px]">
        <path d="M1.5 17.5 Q12 17.5 13 28.5 M1.5 9.5 Q19 9.5 20.5 28.5 M1.5 1.8 Q27 2 28.5 28.5" />
        <circle cx="4" cy="26" r="2.2" />
      </Svg>
      <Svg w={32} h={36} className="mt-[27px]">
        <path d="M4 25.5 V16 Q4 6.5 12.5 4.5 Q13 1.5 16 1.5 T19.5 4.5 Q28 6.5 28 16 V25.5 M2.5 25.5 H29.5 Q30.5 25.5 30.5 27 V29.5 H1.5 V27 Q1.5 25.5 2.5 25.5Z M12 29.5 Q12.5 33.5 16 33.5 T20 29.5" />
      </Svg>
      <div className="mt-[17px] flex size-[42px] shrink-0 items-center justify-center rounded-full bg-[#2a2b2e]">
        <div className="grid grid-cols-3 gap-[4px]">
          {Array.from({ length: 9 }, (_, i) => <span key={i} className="size-[5px] rounded-[1px] bg-white" />)}
        </div>
      </div>
      <div className="mt-[14px] h-px w-[42px] shrink-0 bg-[#e3e3e3]" />
      <Svg w={36} h={36} className="mt-[19px]">
        <circle cx="18" cy="18" r="16.7" />
        <path d="M12.5 14 Q12.5 8.5 18 8.5 T23.5 13.5 Q23.5 17 18 19.5 V22" />
        <circle cx="18" cy="26" r="1.7" />
      </Svg>
    </aside>
  );
}

function Watermark() {
  return (
    <div className="absolute right-[7px] bottom-[7px] flex items-center whitespace-nowrap text-white/90 drop-shadow-[1px_1px_1px_rgba(90,90,90,0.75)]">
      <svg width={28} height={28} viewBox="0 0 28 28" fill="currentColor" className="mr-[5px]">
        <path d="M14 1 L20 7 L17.5 9.5 L14 6 L10.5 9.5 L8 7Z M3 11.5 L5.5 14 L3 16.5 L.5 14Z M25 11.5 L27.5 14 L25 16.5 L22.5 14Z M14 11 L17 14 L14 17 L11 14Z M14 27 L8 21 L10.5 18.5 L14 22 L17.5 18.5 L20 21Z" />
      </svg>
      <span className="text-[24.5px] leading-[38px]">@ Người Đồng Hành</span>
    </div>
  );
}

export default function App() {
  return (
    <div className="relative flex h-[925px] w-[1910px] flex-col overflow-hidden bg-[#3b383a] pt-[2px] pl-[2px] font-['Open_Sans','Noto_Sans',sans-serif] text-[#0f0f0f] [font-stretch:90%]">
      <TopBar />
      <div className="flex min-h-0 flex-1 overflow-hidden rounded-b-xl bg-[#ebebeb] pt-[5px]">
        <LeftTools />
        <main className="ml-[5px] flex w-[1514px] shrink-0 flex-col">
          <div className="relative h-[820px] shrink-0 overflow-hidden rounded-md bg-white">
            <Chart />
            <Legend />
            <RangeBar />
          </div>
          <div className="mt-[5px] shrink-0"><BottomPanel /></div>
        </main>
        <div className="relative ml-[6px] flex w-[263px] shrink-0 flex-col">
          <Watchlist />
          <Details />
          <div className="absolute top-[766px] -left-[3px] flex h-[33px] w-[10px] items-center justify-center rounded border border-[#dedede] bg-white text-[#999]">
            <Svg w={5} h={10} sw={1}><path d="M1 1 L4 5 L1 9" /></Svg>
          </div>
        </div>
        <RightTools />
      </div>
      <Watermark />
    </div>
  );
}
